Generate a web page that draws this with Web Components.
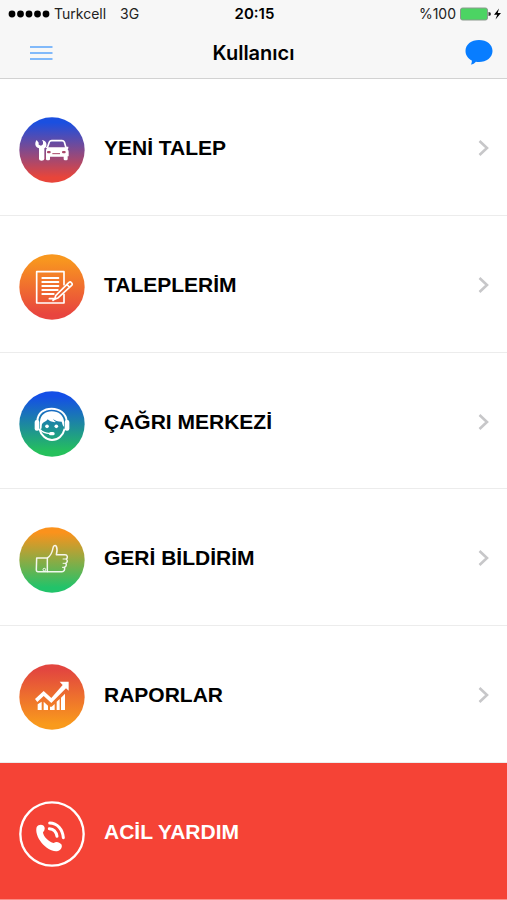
<!DOCTYPE html>
<html lang="tr">
<head>
<meta charset="utf-8">
<meta name="viewport" content="width=device-width, initial-scale=1">
<title>Kullanıcı</title>
<style>
body { margin: 0; background: #fff; }
</style>
</head>
<body>
<app-screen></app-screen>
<script>
const ICONS = {
  car: { from: '#1a4fe0', to: '#e8453a', art: `
    <path fill="#fff" d="M75 90 L81 98 L81 104 L88 107 L94 103 L94 95 L91 90 C101 91 106 99 104 107 C103 111 101 113 98 115 L98 147 Q97 152 90 152 Q82 152 82 147 L82 115 C73 112 70 106 71 99 C72 95 73 92 75 90Z"/>
    <path fill="none" stroke="#fff" stroke-width="5" stroke-linejoin="round" d="M107 113 L113 96 Q115 92 120 92 L151 92 Q156 92 158 96 L163 113"/>
    <path fill="#fff" d="M101 110 h5 l2 2 h54 l2 -2 h6 v5 l-2 3 q3 3 3 8 v13 h-3 v8 q0 4 -4 4 h-4 q-4 0 -4 -4 v-7 h-41 v7 q0 4 -4 4 h-4 q-4 0 -4 -4 v-25 q0 -5 3 -7 q-5 -1 -5 -8Z"/>
    <rect x="106" y="123" width="11" height="7" rx="3" fill="#a94868"/>
    <rect x="151" y="123" width="11" height="7" rx="3" fill="#a94868"/>
    <path stroke="#a94868" stroke-width="3" d="M122 131 H145"/>` },
  note: { from: '#f8971f', to: '#e8453f', art: `
    <g fill="none" stroke="#fff" stroke-linejoin="round" stroke-linecap="round">
      <path stroke-width="5" d="M157 113 V74 H75 V168 H157 V142"/>
      <path stroke-width="6" d="M92 93 H140 M92 105 H140 M92 117 H140 M92 129 H138 M92 141 H126"/>
      <path stroke-width="5" d="M132 146 L172 106 Q176 103 179 107 Q184 111 180 115 L140 152 L129 157 L132 146 Z M166 113 L173 120"/>
      <path stroke-width="5" d="M113 155 H129 L124 160"/>
    </g>` },
  agent: { from: '#144fe6', to: '#25c05c', art: `
    <path fill="none" stroke="#fff" stroke-width="6" d="M77 111 C78 87 97 74 120 74 C144 74 163 88 165 111"/>
    <rect x="69" y="108" width="14" height="32" rx="6" fill="#fff"/>
    <rect x="159" y="108" width="14" height="32" rx="6" fill="#fff"/>
    <path fill="none" stroke="#fff" stroke-width="6" d="M83 134 C88 154 103 168 121 168 C139 168 154 155 159 134"/>
    <path fill="#fff" d="M85 134 V112 C87 93 101 82 120 82 C141 82 155 94 157 112 V128 C153 126 152 119 150 113 C139 113 129 110 124 104 C128 112 131 112 134 114 C123 116 113 111 108 106 C104 114 94 113 91 121 C89 128 92 138 85 134Z"/>
    <circle cx="106" cy="127" r="5.500" fill="#fff"/><circle cx="134" cy="127" r="5.500" fill="#fff"/>
    <path fill="none" stroke="#fff" stroke-width="4" d="M86 137 C93 146 102 148 115 149"/>
    <rect x="112" y="144" width="17" height="10" rx="5" fill="#fff"/>` },
  thumb: { from: '#fb921c', to: '#22c36a', art: `
    <g fill="none" stroke="#fff" stroke-opacity=".9" stroke-width="4.500" stroke-linejoin="round">
      <path d="M75 114 H107 V155 H79 Q74 155 74 149 Z"/>
      <path d="M107 114 C118 107 122 96 124 84 C125 77 131 74 134 79 C138 88 136 97 134 104 H160 C168 104 169 113 164 117 C169 121 167 128 162 130 C166 135 163 141 158 142 C161 149 157 155 151 155 H107"/>
      <path d="M153 117 H164 M153 130 H162 M151 142 H158" stroke-width="3"/>
      <circle cx="98" cy="149" r="4" stroke-width="3"/>
    </g>` },
  chart: { from: '#e2463f', to: '#f99a1c', art: `
    <g fill="#fff"><path d="M78 142 L90 134 V159 H78Z M96 134 L109 146 V159 H96Z M115 149 H120 L129 141 V159 H115Z M135 134 L144 126 V159 H135Z M148 122 L160 110 V159 H148Z"/>
    <path d="M144 74 H171 V101 L163 94 L119 138 L96 117 L77 135 L70 126 L96 102 L119 123 L153 84Z"/></g>` },
  phone: { art: `
    <circle cx="121" cy="120" r="95" fill="none" stroke="#fff" stroke-width="7"/>
    <path fill="#fff" d="M75 99 C80 91 90 91 96 95 C101 100 100 108 94 115 C94 127 112 145 126 147 C134 141 143 144 149 151 C153 158 149 168 139 171 C109 178 66 130 75 99Z"/>
    <g fill="none" stroke="#fff" stroke-width="9" stroke-linecap="round"><path d="M113 104 C125 105 134 114 136 127"/><path d="M114 87 C137 87 153 106 155 131"/></g>` }
};

class RoundIcon extends HTMLElement {
  constructor() {
    super();
    const icon = ICONS[this.getAttribute('name')];
    const disc = icon.from ? `<defs><linearGradient id="g" x1="0" y1="0" x2="0" y2="1"><stop offset=".08" stop-color="${icon.from}"/><stop offset=".92" stop-color="${icon.to}"/></linearGradient></defs><circle cx="121" cy="120" r="98" fill="url(#g)"/>` : '';
    this.attachShadow({ mode: 'open' }).innerHTML = `
      <style>:host { display: block; width: 66px; height: 66px; flex: none; } svg { display: block; }</style>
      <svg width="66" height="66" viewBox="22 21 198 198" aria-hidden="true">${disc}${icon.art}</svg>`;
  }
}

class StatusBar extends HTMLElement {
  constructor() {
    super();
    this.attachShadow({ mode: 'open' }).innerHTML = `
      <style>
        :host { display: grid; grid-template-columns: 1fr auto 1fr; align-items: center; height: 28px; padding: 0 6px 0 8px; font-size: 14px; line-height: 20px; color: #222; }
        div { display: flex; align-items: center; }
        .left svg { margin-right: 4px; }
        .net { margin-left: 14px; }
        .right { justify-content: flex-end; gap: 4px; }
        b { font-weight: 600; font-size: 15px; color: #000; }
      </style>
      <div class="left">
        <svg width="42" height="8" viewBox="0 0 42 8" aria-hidden="true"><circle cx="4" cy="4" r="3.4"/><circle cx="12.5" cy="4" r="3.4"/><circle cx="21" cy="4" r="3.4"/><circle cx="29.5" cy="4" r="3.4"/><circle cx="38" cy="4" r="3.4"/></svg>
        <span>Turkcell</span><span class="net">3G</span>
      </div>
      <b>20:15</b>
      <div class="right">
        <span>%100</span>
        <svg width="41" height="14" viewBox="0 0 41 14" aria-hidden="true">
          <rect x=".5" y="1" width="27" height="12" rx="2" fill="#4cd463" stroke="#8b9a8e"/>
          <path d="M28.500 5 Q31 5 31 7 Q31 9 28.500 9Z" fill="#333"/>
          <path d="M39 1.500 L34 7.700 H37.200 L35.500 12.500 L41 6 H37.700Z" fill="#000"/>
        </svg>
      </div>`;
  }
}

class NavBar extends HTMLElement {
  constructor() {
    super();
    this.attachShadow({ mode: 'open' }).innerHTML = `
      <style>
        :host { display: grid; grid-template-columns: 1fr auto 1fr; align-items: center; height: 50px; padding: 0 14px; }
        h1 { margin: 0; font-size: 20px; line-height: 24px; font-weight: 600; color: #000; text-align: center; }
        button { display: block; border: 0; background: none; cursor: pointer; }
        .menu { justify-self: start; padding: 0 15px; }
        .chat { justify-self: end; padding: 0; }
        svg { display: block; }
      </style>
      <button class="menu" type="button" aria-label="Menü"><svg width="24" height="16" viewBox="0 0 24 16"><path d="M1 2 H23.500 M1 8 H23.500 M1 14 H23.500" stroke="#5ba5fb" stroke-width="1.700"/></svg></button>
      <h1><slot></slot></h1>
      <button class="chat" type="button" aria-label="Mesajlar"><svg width="28" height="26" viewBox="0 0 28 26"><path d="M14 0 C21.800 0 27.500 4.600 27.500 11 C27.500 17.400 21.500 22 14 22 C12.900 22 11.800 21.900 10.900 21.700 C9.600 23.300 8 24.300 5.800 24.500 C6.700 23.300 7 21.800 6.800 20.400 C3 18.600 .5 15.200 .5 11 C.5 4.600 6.200 0 14 0Z" fill="#087dff"/></svg></button>`;
  }
}

class MenuRow extends HTMLElement {
  constructor() {
    super();
    const urgent = this.hasAttribute('urgent');
    this.attachShadow({ mode: 'open' }).innerHTML = `
      <style>
        :host { display: flex; flex: 1 1 0; min-height: 100px; color: #000; background: #fff; border-bottom: 1px solid #ececec; }
        :host([urgent]) { color: #fff; background: #f54336; border-bottom-color: #fa8d85; }
        a { flex: 1; display: flex; align-items: center; gap: 19px; padding: 2px 18px 0 19px; color: inherit; text-decoration: none; }
        round-icon { padding-top: 4px; }
        .label { flex: 1; font: bold 21px/28px "Liberation Sans", Arial, sans-serif; }
      </style>
      <a href="#${this.getAttribute('icon')}">
        <round-icon name="${this.getAttribute('icon')}"></round-icon>
        <span class="label"><slot></slot></span>
        ${urgent ? '' : '<svg width="11" height="18" viewBox="0 0 11 18" aria-hidden="true"><path d="M1.500 2 L9 9 L1.500 16" fill="none" stroke="#c7c7c9" stroke-width="2.600"/></svg>'}
      </a>`;
  }
}

class AppScreen extends HTMLElement {
  constructor() {
    super();
    this.attachShadow({ mode: 'open' }).innerHTML = `
      <style>
        :host { display: flex; flex-direction: column; min-height: 100vh; font-family: Inter, Roboto, sans-serif; }
        header { background: #f7f7f7; border-bottom: 1px solid #d2d2d2; }
        nav { flex: 1; display: flex; flex-direction: column; }
      </style>
      <header><status-bar></status-bar><nav-bar>Kullanıcı</nav-bar></header>
      <nav aria-label="Ana menü">
        <menu-row icon="car">YENİ TALEP</menu-row>
        <menu-row icon="note">TALEPLERİM</menu-row>
        <menu-row icon="agent">ÇAĞRI MERKEZİ</menu-row>
        <menu-row icon="thumb">GERİ BİLDİRİM</menu-row>
        <menu-row icon="chart">RAPORLAR</menu-row>
        <menu-row icon="phone" urgent>ACİL YARDIM</menu-row>
      </nav>`;
  }
}

customElements.define('round-icon', RoundIcon);
customElements.define('status-bar', StatusBar);
customElements.define('nav-bar', NavBar);
customElements.define('menu-row', MenuRow);
customElements.define('app-screen', AppScreen);
</script>
</body>
</html>
